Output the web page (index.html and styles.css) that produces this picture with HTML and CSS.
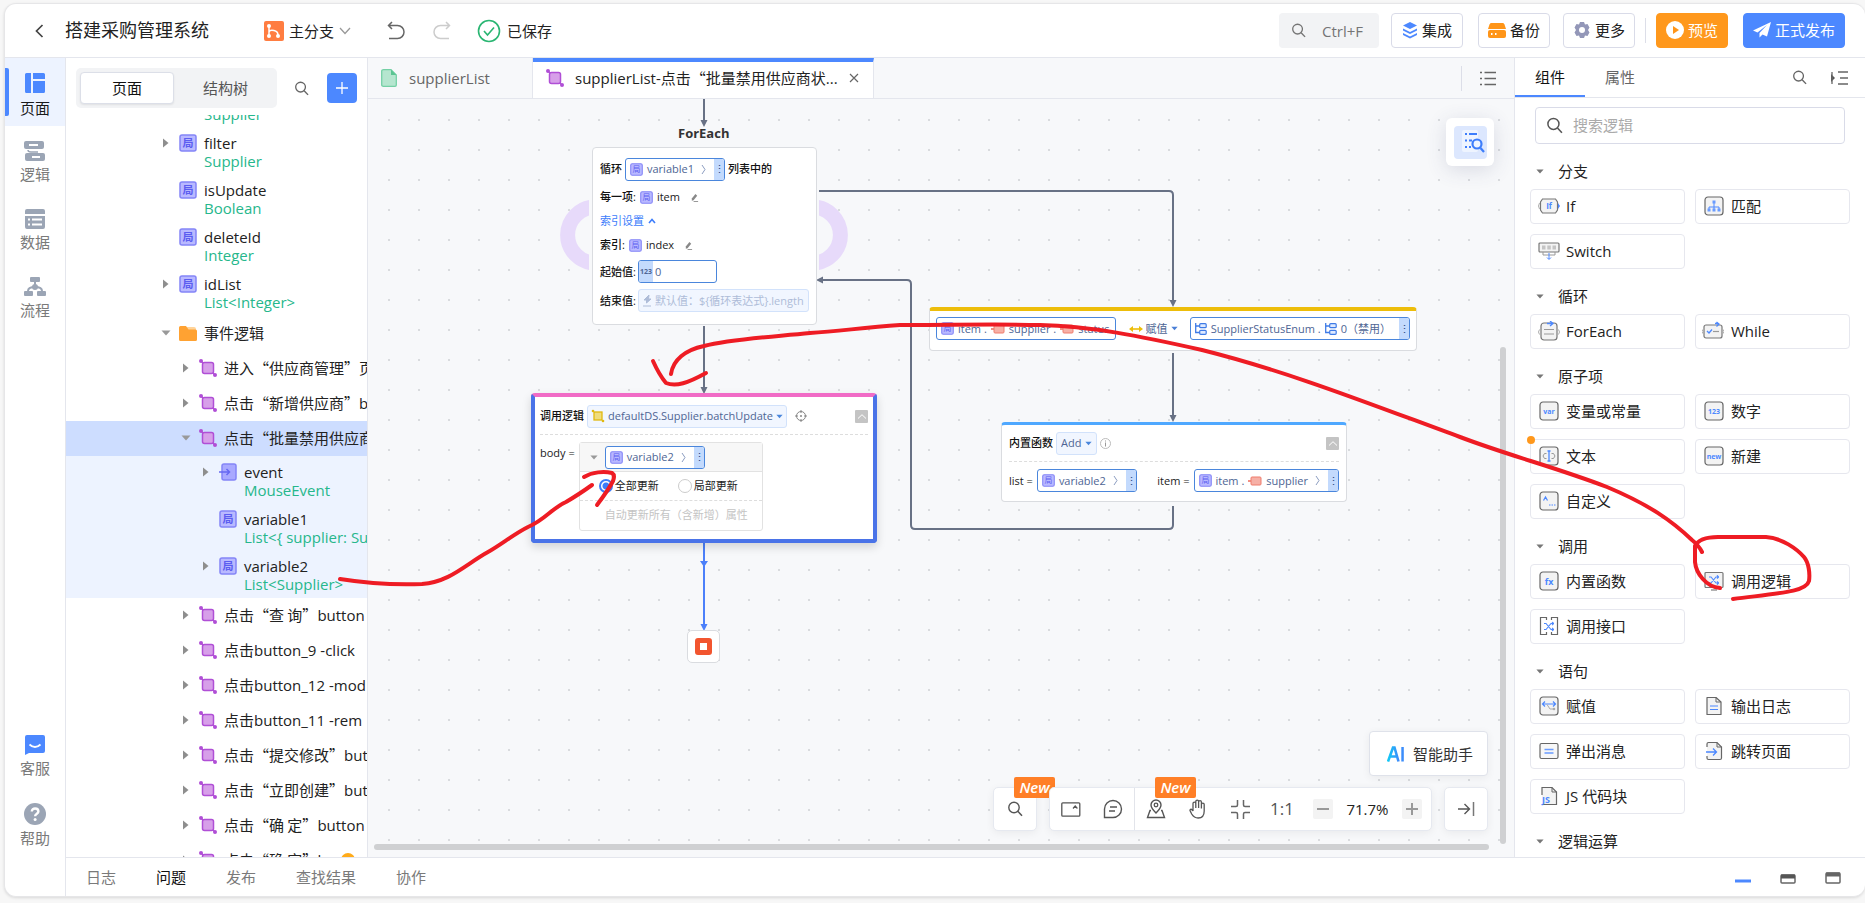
FILE: index.html
```html
<!DOCTYPE html>
<html lang="zh-CN">
<head>
<meta charset="utf-8">
<title>搭建采购管理系统</title>
<link rel="stylesheet" href="styles.css">
</head>
<body>
<svg class="defs" aria-hidden="true">
  <symbol id="search" viewBox="0 0 16 16"><circle cx="7" cy="6.500" r="5.200" fill="none" stroke="currentColor" stroke-width="1.400"/><path d="M10.800 10.300L15 14.800" stroke="currentColor" stroke-width="1.500"/></symbol>
  <symbol id="local" viewBox="0 0 18 18"><rect x="1" y="1" width="16" height="16" rx="2" fill="#b9b9ff" stroke="#8485f7" stroke-width="1.500"/><text x="9" y="13" text-anchor="middle" font-size="11" fill="#5b5df0">局</text></symbol>
  <symbol id="param" viewBox="0 0 18 18"><rect x="3" y="1" width="14" height="16" rx="2" fill="#a9a9ff" stroke="#8485f7" stroke-width="1.500"/><path d="M0 9h10M7.500 6l3 3-3 3" fill="none" stroke="#6668f2" stroke-width="1.500"/></symbol>
  <symbol id="logic" viewBox="0 0 18 18"><path d="M1.500 1.500l14.500 14.500" stroke="#b04fd6" stroke-width="1.500"/><rect x="3.500" y="3.500" width="11" height="11" rx="2" fill="#d79fe9" stroke="#b04fd6" stroke-width="1.500"/><circle cx="2" cy="2" r="2" fill="#b04fd6"/><circle cx="16" cy="16" r="2" fill="#b04fd6"/></symbol>
  <symbol id="ylogic" viewBox="0 0 14 14"><rect x="3" y="3" width="8" height="8" fill="#efdc7c" stroke="#e0b810" stroke-width="1.300"/><circle cx="2" cy="2" r="1.300" fill="#e0b810"/><circle cx="12" cy="12" r="1.300" fill="#e0b810"/></symbol>
  <symbol id="folder" viewBox="0 0 18 16"><path d="M8 2h7q2 0 2 2v3H8z" fill="#ffd49b"/><path d="M0 2.500Q0 1 1.500 1H7l2.500 3.500h7q1.500 0 1.500 1.500v8.500q0 1.500-1.500 1.500h-15Q0 16 0 14.500z" fill="#ffa232"/></symbol>
  <symbol id="arrow" viewBox="0 0 6 10"><path d="M0 .5L5.500 5 0 9.500z" fill="#8e8e8e"/></symbol>
  <symbol id="down" viewBox="0 0 10 6"><path d="M.5 .5h9L5 5.500z" fill="currentColor"/></symbol>
  <symbol id="chev" viewBox="0 0 12 8"><path d="M1 1l5 5.500L11 1" fill="none" stroke="currentColor" stroke-width="1.300"/></symbol>
  <symbol id="prop" viewBox="0 0 14 10"><path d="M0 5h4" stroke="#ef6a5a" stroke-width="1.500"/><rect x="3" y="1" width="10" height="8" rx="1" fill="#f6b0a6" stroke="#ef7c6d"/></symbol>
  <symbol id="enum" viewBox="0 0 12 12"><path d="M.7 0v9.500H5M1 3h4" fill="none" stroke="#3e7be6" stroke-width="1.300"/><rect x="4.700" y=".7" width="6.500" height="4" rx="1" fill="#dfeaff" stroke="#3e7be6" stroke-width="1.200"/><rect x="4.700" y="7.300" width="6.500" height="4" rx="1" fill="#dfeaff" stroke="#3e7be6" stroke-width="1.200"/></symbol>
  <symbol id="pencil" viewBox="0 0 10 10"><path d="M2 6l4-5 2 2-4 5-2 .5z" fill="#888"/><path d="M4 9.500h5" stroke="#888"/></symbol>
  <symbol id="box" viewBox="0 0 20 20"><rect x="1" y="1" width="18" height="18" rx="3" fill="#f3f3f3" stroke="#666" stroke-width="1.200"/></symbol>
  <symbol id="page" viewBox="0 0 20 20"><path d="M3 1.500h9L17 6v12.500H3z" fill="#f3f3f3" stroke="#666" stroke-width="1.200" stroke-linejoin="round"/><path d="M12 1.500V6h5" fill="none" stroke="#666"/></symbol>
  <symbol id="shuffle" viewBox="0 0 10 10"><path d="M0 2h2l5 6h2.500M0 8h2l5-6h2.500M8 .3L9.700 2 8 3.700M8 6.300L9.700 8 8 9.700" fill="none" stroke="#4c88ff" stroke-width="1.100"/></symbol>
</svg>

<div class="app">
  <header class="top">
    <button class="back" aria-label="返回"><svg width="9" height="14" viewBox="0 0 9 14"><path d="M7.500 1L1.500 7l6 6" fill="none" stroke="#444" stroke-width="1.700"/></svg></button>
    <h1 class="title">搭建采购管理系统</h1>
    <button class="branch">
      <svg width="20" height="20" viewBox="0 0 20 20"><rect width="20" height="20" rx="2" fill="#ff7d41"/><path d="M5 5v10M5 11c1-3 9-2 9 3" fill="none" stroke="#fff" stroke-width="1.500"/><circle cx="5" cy="5" r="2" fill="#fff"/><circle cx="5" cy="15" r="2" fill="#fff"/><circle cx="14" cy="15" r="2" fill="#fff"/></svg>
      <span>主分支</span>
      <svg class="grey" width="12" height="8"><use href="#chev"/></svg>
    </button>
    <button class="hist" aria-label="撤销"><svg width="18" height="20" viewBox="0 0 18 20"><path d="M5 1L1.500 4.500 5 8M2 4.500h8.500a6 6 0 0 1 0 13H2" fill="none" stroke="#666" stroke-width="1.500"/></svg></button>
    <button class="hist redo" aria-label="重做"><svg width="18" height="20" viewBox="0 0 18 20"><path d="M13 1l3.500 3.500L13 8M16 4.500H7.500a6 6 0 0 0 0 13H16" fill="none" stroke="#ccc" stroke-width="1.500"/></svg></button>
    <div class="saved"><svg width="24" height="24" viewBox="0 0 24 24"><circle cx="12" cy="12" r="10.500" fill="none" stroke="#2bb673" stroke-width="1.600"/><path d="M7 12l3.500 4L17 8.500" fill="none" stroke="#2bb673" stroke-width="1.600"/></svg><span>已保存</span></div>
    <div class="actions">
      <button class="find"><svg width="15" height="15"><use href="#search"/></svg><span>Ctrl+F</span></button>
      <button class="btn"><svg width="16" height="18" viewBox="0 0 16 18"><path d="M8 1l7 3.500L8 8 1 4.500z" fill="#4c88ff"/><path d="M1 7.500L8 11l7-3.500v2L8 13 1 9.500zM1 12l7 3.500 7-3.500v2L8 17.500 1 14z" fill="#4c88ff"/></svg>集成</button>
      <button class="btn"><svg width="18" height="16" viewBox="0 0 18 16"><path d="M3 1h12q1 0 1.500 1.500L18 7H0l1.500-4.500Q2 1 3 1z" fill="#ff9518"/><rect y="8" width="18" height="8" rx="2" fill="#ff9518"/><path d="M3 12h1.500M7 12h1.500" stroke="#fff" stroke-width="2"/></svg>备份</button>
      <button class="btn more"><svg width="18" height="18" viewBox="0 0 18 18"><path d="M7 1h4l1 2.500 2.500-.5 2 3.500L15 9l1.500 2.500-2 3.500-2.500-.5L11 17H7l-1-2.500-2.500.5-2-3.500L3 9 1.500 6.500l2-3.500 2.500.5z" fill="#9397b8"/><circle cx="9" cy="9" r="3" fill="#fff"/></svg>更多</button>
      <span class="sep"></span>
      <button class="btn orange"><svg width="18" height="18" viewBox="0 0 18 18"><circle cx="9" cy="9" r="9" fill="#fff"/><path d="M7 5l6 4-6 4z" fill="#ff9518"/></svg>预览</button>
      <button class="btn blue"><svg width="18" height="16" viewBox="0 0 18 16"><path d="M18 0L0 8.500l4.500 2L14 3 6.500 11v4.500l3-3 4.500 2z" fill="#fff"/></svg>正式发布</button>
    </div>
  </header>

  <div class="main">
    <nav class="rail">
      <a class="nav on" href="#"><svg width="20" height="20" viewBox="0 0 20 20"><path d="M1.500 0H6v20H1.500Q0 20 0 18.500v-17Q0 0 1.500 0zM8 0h10.500Q20 0 20 1.500V6H8zM8 8h12v10.500q0 1.500-1.500 1.500H8z" fill="#4c88ff"/></svg>页面</a>
      <a class="nav" href="#"><svg width="22" height="20" viewBox="0 0 22 20"><rect width="20" height="8" rx="2" fill="#9ba5b5"/><rect x="1" y="12" width="20" height="8" rx="2" fill="#9ba5b5"/><path d="M5 4h9M8 16h8" stroke="#fff" stroke-width="2"/><path d="M4 9q0 2 3 2h7" fill="none" stroke="#9ba5b5" stroke-width="1.500"/></svg>逻辑</a>
      <a class="nav" href="#"><svg width="20" height="20" viewBox="0 0 20 20"><path d="M2 0h16q2 0 2 2v3H0V2Q0 0 2 0zM0 7h20v11q0 2-2 2H2q-2 0-2-2z" fill="#9ba5b5"/><path d="M3 10.500h2M7 10.500h10M3 15.500h2M7 15.500h10" stroke="#fff" stroke-width="2"/></svg>数据</a>
      <a class="nav" href="#"><svg width="22" height="20" viewBox="0 0 22 20"><rect x="6" y="0" width="10" height="5" rx="1" fill="#9ba5b5"/><path d="M11 5v5M4 14q0-4 7-4t7 4" fill="none" stroke="#9ba5b5" stroke-width="2"/><circle cx="11" cy="10" r="3" fill="#9ba5b5"/><rect x="0" y="14" width="9" height="5" rx="1" fill="#9ba5b5"/><rect x="13" y="14" width="9" height="5" rx="1" fill="#9ba5b5"/></svg>流程</a>
      <a class="nav push" href="#"><svg width="20" height="20" viewBox="0 0 20 20"><path d="M2 0h16q2 0 2 2v14q0 2-2 2H4l-4 2V2Q0 0 2 0z" fill="#4c88ff"/><path d="M4.500 9.500q5.500 5 11 0" fill="none" stroke="#fff" stroke-width="1.800"/></svg>客服</a>
      <a class="nav" href="#"><svg width="22" height="22" viewBox="0 0 22 22"><circle cx="11" cy="11" r="11" fill="#9ba5b5"/><path d="M7.800 8.600c0-4.200 6.600-4 6.600 0 0 2.200-3.300 2.200-3.300 4.700" fill="none" stroke="#fff" stroke-width="2.400"/><circle cx="11.100" cy="16.500" r="1.500" fill="#fff"/></svg>帮助</a>
    </nav>

    <div class="work">
      <div class="columns">
        <aside class="tree-panel">
          <div class="tree-head">
            <div class="seg"><button class="on">页面</button><button>结构树</button></div>
            <button class="glass" aria-label="搜索"><svg width="15" height="15"><use href="#search"/></svg></button>
            <button class="plus" aria-label="新增"><svg width="14" height="14" viewBox="0 0 14 14"><path d="M7 1v12M1 7h12" stroke="#fff" stroke-width="1.300"/></svg></button>
          </div>
          <div class="tree">
            <div class="row clip"><i></i><b></b><span><em>Supplier</em></span></div>
            <div class="vars">
              <div class="row two"><i><svg width="6" height="10"><use href="#arrow"/></svg></i><b><svg width="18" height="18"><use href="#local"/></svg></b><span>filter<em>Supplier</em></span></div>
              <div class="row two"><i></i><b><svg width="18" height="18"><use href="#local"/></svg></b><span>isUpdate<em>Boolean</em></span></div>
              <div class="row two"><i></i><b><svg width="18" height="18"><use href="#local"/></svg></b><span>deleteId<em>Integer</em></span></div>
              <div class="row two"><i><svg width="6" height="10"><use href="#arrow"/></svg></i><b><svg width="18" height="18"><use href="#local"/></svg></b><span>idList<em>List&lt;Integer&gt;</em></span></div>
            </div>
            <div class="row"><i><svg class="grey" width="10" height="6"><use href="#down"/></svg></i><b><svg width="18" height="16"><use href="#folder"/></svg></b><span>事件逻辑</span></div>
            <div class="row l2 cjk"><i><svg width="6" height="10"><use href="#arrow"/></svg></i><b><svg width="18" height="18"><use href="#logic"/></svg></b><span>进入“供应商管理”页</span></div>
            <div class="row l2 cjk"><i><svg width="6" height="10"><use href="#arrow"/></svg></i><b><svg width="18" height="18"><use href="#logic"/></svg></b><span>点击“新增供应商”<bdi>button</bdi></span></div>
            <div class="row l2 cjk picked"><i><svg class="grey" width="10" height="6"><use href="#down"/></svg></i><b><svg width="18" height="18"><use href="#logic"/></svg></b><span>点击“批量禁用供应商</span></div>
            <div class="vars inner">
              <div class="row two l3"><i><svg width="6" height="10"><use href="#arrow"/></svg></i><b><svg width="18" height="18"><use href="#param"/></svg></b><span>event<em>MouseEvent</em></span></div>
              <div class="row two l3"><i></i><b><svg width="18" height="18"><use href="#local"/></svg></b><span>variable1<em>List&lt;{ supplier: Supplier</em></span></div>
              <div class="row two l3"><i><svg width="6" height="10"><use href="#arrow"/></svg></i><b><svg width="18" height="18"><use href="#local"/></svg></b><span>variable2<em>List&lt;Supplier&gt;</em></span></div>
            </div>
            <div class="row l2 cjk"><i><svg width="6" height="10"><use href="#arrow"/></svg></i><b><svg width="18" height="18"><use href="#logic"/></svg></b><span>点击“查 询”<bdi>button</bdi></span></div>
            <div class="row l2"><i><svg width="6" height="10"><use href="#arrow"/></svg></i><b><svg width="18" height="18"><use href="#logic"/></svg></b><span>点击button_9 -click</span></div>
            <div class="row l2"><i><svg width="6" height="10"><use href="#arrow"/></svg></i><b><svg width="18" height="18"><use href="#logic"/></svg></b><span>点击button_12 -mod</span></div>
            <div class="row l2"><i><svg width="6" height="10"><use href="#arrow"/></svg></i><b><svg width="18" height="18"><use href="#logic"/></svg></b><span>点击button_11 -rem</span></div>
            <div class="row l2 cjk"><i><svg width="6" height="10"><use href="#arrow"/></svg></i><b><svg width="18" height="18"><use href="#logic"/></svg></b><span>点击“提交修改”<bdi>button</bdi></span></div>
            <div class="row l2 cjk"><i><svg width="6" height="10"><use href="#arrow"/></svg></i><b><svg width="18" height="18"><use href="#logic"/></svg></b><span>点击“立即创建”<bdi>button</bdi></span></div>
            <div class="row l2 cjk"><i><svg width="6" height="10"><use href="#arrow"/></svg></i><b><svg width="18" height="18"><use href="#logic"/></svg></b><span>点击“确 定”<bdi>button</bdi></span></div>
            <div class="row l2 cjk"><i><svg width="6" height="10"><use href="#arrow"/></svg></i><b><svg width="18" height="18"><use href="#logic"/></svg></b><span>点击“确 定”<bdi>b</bdi></span><u class="warn"></u></div>
          </div>
        </aside>

        <section class="editor">
          <div class="tabs">
            <button class="tab"><svg width="16" height="18" viewBox="0 0 16 18"><path d="M2.500 .7H10L15.300 6v10q0 1.300-1.300 1.300H2.500Q.7 17.300.7 16V2Q.7.7 2.500.7z" fill="#b5e6cf" stroke="#74d0a5" stroke-width="1.300"/><path d="M10 .7V6h5.300z" fill="#5bc492"/></svg><span>supplierList</span></button>
            <button class="tab on"><svg width="18" height="18"><use href="#logic"/></svg><span>supplierList-点击<span class="cjk">“</span>批量禁用供应商状...</span><svg width="10" height="10" viewBox="0 0 10 10"><path d="M1 1l8 8M9 1L1 9" stroke="#666" stroke-width="1.200"/></svg></button>
            <button class="tablist" aria-label="标签列表"><svg width="16" height="15" viewBox="0 0 16 15"><path d="M0 1.500h2M4.500 1.500H16M0 7.500h2M4.500 7.500H16M0 13.500h2M4.500 13.500H16" stroke="#666" stroke-width="1.300"/></svg></button>
          </div>
          <div class="canvas">
            <svg class="wires" aria-hidden="true">
              <g transform="translate(-368 -99)">
                <clipPath id="arcs"><path d="M555 190h34v90h-34zM819 190h34v90h-34z"/></clipPath>
                <g clip-path="url(#arcs)" fill="none" stroke="#e7dafa" stroke-width="15"><circle cx="595.600" cy="235" r="28"/><circle cx="812.400" cy="235" r="28"/></g>
                <g fill="none" stroke="#687185" stroke-width="2">
                  <path d="M704 99v22M704 326v62M819 191h350q4 0 4 4v107M1173 353v64M1173 506v19q0 4-4 4H915q-4 0-4-4V284q0-4-4-4h-85"/>
                </g>
                <path d="M700.500 120h7l-3.500 7zM700.500 387h7l-3.500 7zM1169.500 300h7l-3.500 7zM1169.500 415h7l-3.500 7zM823 276.500v7l-7-3.500z" fill="#687185"/>
                <path d="M704 543v83" stroke="#4c80fa" stroke-width="2"/>
                <path d="M700 561h8l-4 6zM700.500 624h7l-3.500 7z" fill="#4c80fa"/>
              </g>
            </svg>

            <div class="caption">ForEach</div>
            <div class="node foreach">
              <div class="line"><strong>循环</strong><span class="chip"><svg width="13" height="13"><use href="#local"/></svg><span>variable1</span><svg class="go" width="5" height="9" viewBox="0 0 5 9"><path d="M1 0l3 4.500L1 9" fill="none" stroke="#8b9cc0"/></svg><button aria-label="更多">⋮</button></span><strong>列表中的</strong></div>
              <div class="line s24"><strong>每一项:</strong><svg width="13" height="13"><use href="#local"/></svg><span>item</span><svg class="pen" width="9" height="9"><use href="#pencil"/></svg></div>
              <div class="line s24 link"><a href="#">索引设置</a><svg width="8" height="6" viewBox="0 0 8 6"><path d="M1 5l3-3.500L7 5" fill="none" stroke="#3d7dfb" stroke-width="1.600"/></svg></div>
              <div class="line s24"><strong class="mid">索引:</strong><svg width="13" height="13"><use href="#local"/></svg><span>index</span><svg class="pen" width="9" height="9"><use href="#pencil"/></svg></div>
              <div class="line s29"><label class="mid" for="start">起始值:</label><span class="field"><u>123</u><input id="start" value="0"></span></div>
              <div class="line s29"><label class="mid" for="end">结束值:</label><span class="field soft"><svg width="11" height="12" viewBox="0 0 11 12"><path d="M7 0L2 5h2.500v3L9 4H6.500zM1 11h8" fill="#aebcd8" stroke="#aebcd8"/></svg><input id="end" placeholder="默认值：${循环表达式}.length"></span></div>
            </div>

            <div class="node assign">
              <span class="chip"><svg width="13" height="13"><use href="#local"/></svg><span>item .</span><svg width="14" height="10"><use href="#prop"/></svg><span>supplier .</span><svg width="14" height="10"><use href="#prop"/></svg><span>status</span></span>
              <span class="op"><svg width="14" height="8" viewBox="0 0 14 8"><path d="M2 4h10" stroke="#edbd0a" stroke-width="1.600"/><path d="M0 4l4-3v6zM14 4l-4-3v6z" fill="#edbd0a"/></svg>
              <select aria-label="操作"><option>赋值</option></select><svg width="7" height="5"><use href="#down"/></svg></span>
              <span class="chip"><svg width="12" height="12"><use href="#enum"/></svg><span>SupplierStatusEnum .</span><svg width="12" height="12"><use href="#enum"/></svg><span>0（禁用）</span><button aria-label="更多">⋮</button></span>
            </div>

            <div class="node add">
              <div class="head"><strong>内置函数</strong><span class="pick"><select aria-label="函数"><option>Add</option></select><svg width="7" height="5"><use href="#down"/></svg></span><svg width="11" height="11" viewBox="0 0 11 11"><circle cx="5.500" cy="5.500" r="5" fill="none" stroke="#bbb"/><path d="M5.500 2.500v1M5.500 4.500v4" stroke="#999"/></svg><button class="fold" aria-label="收起"><svg width="8" height="5" viewBox="0 0 8 5"><path d="M0 4.500L4 .7l4 3.800" fill="none" stroke="#fff"/></svg></button></div>
              <div class="args"><span>list =</span><span class="chip"><svg width="13" height="13"><use href="#local"/></svg><span>variable2</span><svg class="go" width="5" height="9" viewBox="0 0 5 9"><path d="M1 0l3 4.500L1 9" fill="none" stroke="#8b9cc0"/></svg><button aria-label="更多">⋮</button></span><span class="next">item =</span><span class="chip"><svg width="13" height="13"><use href="#local"/></svg><span>item .</span><svg width="14" height="10"><use href="#prop"/></svg><span>supplier</span><svg class="go" width="5" height="9" viewBox="0 0 5 9"><path d="M1 0l3 4.500L1 9" fill="none" stroke="#8b9cc0"/></svg><button aria-label="更多">⋮</button></span></div>
            </div>

            <div class="node call">
              <div class="head"><strong>调用逻辑</strong><span class="pick wide"><svg width="14" height="14"><use href="#ylogic"/></svg><select aria-label="逻辑"><option>defaultDS.Supplier.batchUpdate</option></select><svg width="7" height="5"><use href="#down"/></svg></span><svg width="12" height="12" viewBox="0 0 12 12"><circle cx="6" cy="6" r="4.500" fill="none" stroke="#888"/><circle cx="6" cy="6" r="1" fill="#888"/><path d="M6 0v3M6 9v3M0 6h3M9 6h3" stroke="#888"/></svg><button class="fold" aria-label="收起"><svg width="8" height="5" viewBox="0 0 8 5"><path d="M0 4.500L4 .7l4 3.800" fill="none" stroke="#fff"/></svg></button></div>
              <div class="body"><span>body =</span>
                <div class="grid">
                  <div class="ghead"><svg class="grey" width="8" height="5"><use href="#down"/></svg><span class="chip"><svg width="13" height="13"><use href="#local"/></svg><span>variable2</span><svg class="go" width="5" height="9" viewBox="0 0 5 9"><path d="M1 0l3 4.500L1 9" fill="none" stroke="#8b9cc0"/></svg><button aria-label="更多">⋮</button></span></div>
                  <div class="radios"><label><input type="radio" name="mode" checked>全部更新</label><label><input type="radio" name="mode">局部更新</label></div>
                  <div class="hint">自动更新所有（含新增）属性</div>
                </div>
              </div>
            </div>
            <div class="node stop"><span></span></div>

            <button class="outline" aria-label="大纲"><span><svg width="25" height="26" viewBox="-4 -2 25 26"><rect x="-3" y="-1" width="16" height="22" rx="2" fill="#eef4ff"/><path d="M0 3h2M4 3h8M0 9.500h2M4 9.500h3M0 16h2M4 16h2" stroke="#3d7dfb" stroke-width="2"/><circle cx="12" cy="13" r="4.500" fill="#eef4ff" stroke="#3d7dfb" stroke-width="2.200"/><path d="M15.500 17l3.500 4" stroke="#3d7dfb" stroke-width="2.200"/></svg></span></button>

            <div class="dock">
              <button class="ai"><svg width="17" height="16" viewBox="0 0 17 16"><defs><linearGradient id="aig"><stop offset="0" stop-color="#13c8f5"/><stop offset="1" stop-color="#3b8dfb"/></linearGradient></defs><path d="M1 15.500L6 1.500h1.500l4 14M3 10.500h7.500" fill="none" stroke="url(#aig)" stroke-width="2.600"/><path d="M14.300 1h2.500v14.500h-2.500z" fill="#3b8dfb"/></svg><span>智能助手</span></button>
              <div class="tools">
                <div class="card solo"><button aria-label="搜索"><svg width="16" height="16"><use href="#search"/></svg></button><mark>New</mark></div>
                <div class="card">
                  <button aria-label="窗口"><svg width="20" height="15" viewBox="0 0 20 15"><rect x=".8" y=".8" width="18" height="13.400" rx="1" fill="none" stroke="#555" stroke-width="1.300"/><path d="M12 6.500L14.200 4l2.200 2.500" fill="none" stroke="#555" stroke-width="1.200"/></svg></button>
                  <button aria-label="注释"><svg width="20" height="20" viewBox="0 0 20 20"><path d="M1.500 18.500V10a8.500 8.500 0 1 1 8.500 8.500z" fill="none" stroke="#555" stroke-width="1.400"/><path d="M7 8h7M6 12h6" stroke="#555" stroke-width="1.300"/></svg></button>
                  <div class="zoomer">
                    <button aria-label="定位"><svg width="20" height="20" viewBox="0 0 20 20"><path d="M10 14C6 10 5 8 5 6a5 5 0 0 1 10 0c0 2-1 4-5 8zM5 11.500H4L1.500 18.500h17L16 11.500h-1" fill="none" stroke="#555" stroke-width="1.400"/><circle cx="10" cy="6" r="1.800" fill="none" stroke="#555" stroke-width="1.300"/></svg></button><mark>New</mark>
                    <button aria-label="拖动"><svg width="20" height="20" viewBox="0 0 20 20"><path d="M5 12V4.500a1.400 1.400 0 0 1 2.800 0V9V2.500a1.400 1.400 0 0 1 2.800 0V9V3a1.400 1.400 0 0 1 2.800 0v6.500V5.500a1.400 1.400 0 0 1 2.800 0V12c0 5-2.500 7-6 7-3.200 0-5-1.500-6.500-4L2 11.500c0-2 2-1.500 3 .5z" fill="none" stroke="#555" stroke-width="1.300"/></svg></button>
                    <button aria-label="适应"><svg width="19" height="19" viewBox="0 0 19 19"><path d="M6.500 0v5q0 1.500-1.500 1.500H0M12.500 0v5q0 1.500 1.500 1.500h5M6.500 19v-5q0-1.500-1.500-1.500H0M12.500 19v-5q0-1.500 1.500-1.500h5" fill="none" stroke="#666" stroke-width="1.500"/></svg></button>
                    <button class="ratio">1:1</button>
                    <button class="step" aria-label="缩小"><svg width="12" height="12" viewBox="0 0 12 12"><path d="M0 6h12" stroke="#999" stroke-width="2"/></svg></button>
                    <output>71.7%</output>
                    <button class="step" aria-label="放大"><svg width="12" height="12" viewBox="0 0 12 12"><path d="M0 6h12M6 0v12" stroke="#999" stroke-width="2"/></svg></button>
                  </div>
                </div>
                <div class="card solo"><button aria-label="收起"><svg width="17" height="14" viewBox="0 0 17 14"><path d="M0 7h11M6.500 2l5 5-5 5" fill="none" stroke="#555" stroke-width="1.400"/><path d="M15.500 0v14" stroke="#777" stroke-width="1.500"/></svg></button></div>
              </div>
            </div>
            <div class="hbar"></div><div class="vbar"></div>
          </div>
        </section>

        <aside class="lib">
          <div class="libtabs"><button class="on">组件</button><button>属性</button><span class="tools2"><svg width="15" height="15"><use href="#search"/></svg><svg width="17" height="14" viewBox="0 0 17 14"><path d="M0 3l4 4-4 4z" fill="#555"/><path d="M1 1v12M7 1h10M9 7h8M7 13h10" stroke="#666" stroke-width="1.300"/></svg></span></div>
          <div class="libbody">
            <label class="query"><svg width="17" height="17"><use href="#search"/></svg><input placeholder="搜索逻辑" aria-label="搜索逻辑"></label>

            <h2><svg width="8" height="5"><use href="#down"/></svg>分支</h2>
            <div class="items">
              <button><svg width="22" height="20" viewBox="0 0 22 20"><path d="M4.500 3h13l2 3v8l-2 3h-13l-2-3V6z" fill="#f3f3f3" stroke="#777" stroke-width="1.200"/><path d="M1.500 7L.5 10l1 3" fill="none" stroke="#aaa"/><path d="M22 10l-2-3v6z" fill="#4c88ff"/><text x="11" y="13" font-size="8" text-anchor="middle" fill="#4c88ff" font-weight="700">If</text></svg>If</button>
              <button><svg width="20" height="20" viewBox="0 0 20 20"><use href="#box"/><path d="M10 7v4M5 13v-2h10v2M10 11v2" fill="none" stroke="#4c88ff"/><path d="M8.500 4.500h3v3h-3zM3.500 12.500h3v3h-3zM8.500 12.500h3v3h-3zM13.500 12.500h3v3h-3z" fill="#6a9cff"/></svg>匹配</button>
              <button><svg width="22" height="20" viewBox="0 0 22 20"><rect x="1" y="2" width="20" height="9" rx="1" fill="#f3f3f3" stroke="#777" stroke-width="1.200"/><path d="M4 6.500h3.500M9.300 6.500h3.500M14.500 6.500H18" stroke="#c4c4c4" stroke-width="4"/><path d="M5 11v3h12v-3" fill="none" stroke="#999"/><path d="M11 12v6M9 16.500l2 2 2-2" fill="none" stroke="#4c88ff"/></svg>Switch</button>
            </div>

            <h2><svg width="8" height="5"><use href="#down"/></svg>循环</h2>
            <div class="items">
              <button><svg width="22" height="20" viewBox="0 0 22 20"><rect x="3" y="2" width="16" height="17" rx="3" fill="#f3f3f3" stroke="#777" stroke-width="1.200"/><path d="M1.500 8.500L.5 11l1 2.500M20.500 8.500l1 2.500-1 2.500" fill="none" stroke="#aaa"/><path d="M6 8.500h10M6 13h10" stroke="#999" stroke-width="1.200"/><path d="M9 2.500h5M12 0l3 2.500L12 5" fill="none" stroke="#4c88ff" stroke-width="1.300"/></svg>ForEach</button>
              <button class="wideicon"><svg width="22" height="20" viewBox="0 0 22 20"><rect x="2" y="4" width="18" height="13" rx="2" fill="#f3f3f3" stroke="#777" stroke-width="1.200"/><path d="M5 10l2 2 3-3.500M13 2.500h3M14.500 1l2.500 2-2.500 2.500" fill="none" stroke="#4c88ff" stroke-width="1.300"/><path d="M11 10.500h6" stroke="#999" stroke-width="1.200"/><path d="M.8 8.500L0 10.500l.8 2M21.200 8.500l.8 2-.8 2" stroke="#aaa" fill="none"/></svg>While</button>
            </div>

            <h2><svg width="8" height="5"><use href="#down"/></svg>原子项</h2>
            <div class="items">
              <button><svg width="22" height="20" viewBox="-1 0 22 20"><use href="#box" width="20" height="20"/><text class="gl" x="10" y="12.500">var</text></svg>变量或常量</button>
              <button><svg width="20" height="20" viewBox="0 0 20 20"><use href="#box"/><text class="gl" x="10" y="13">123</text></svg>数字</button>
              <button class="dot"><svg width="22" height="20" viewBox="-1 0 22 20"><use href="#box" width="20" height="20"/><path d="M10 5.500v9M8.500 5h3M8.500 15h3" stroke="#4c88ff" stroke-width="1.300"/><path d="M7.500 7.500h-2L4 10l1.500 2.500h2M12.500 7.500h2L16 10l-1.500 2.500h-2" fill="none" stroke="#999"/></svg>文本</button>
              <button><svg width="20" height="20" viewBox="0 0 20 20"><use href="#box"/><text class="gl" x="10" y="12.500">new</text></svg>新建</button>
              <button><svg width="22" height="20" viewBox="-1 0 22 20"><use href="#box" width="20" height="20"/><path d="M4.500 9.500L6.500 6l2 3.500M10 14h1.500M12.500 14H14M15 14h1.500" fill="none" stroke="#4c88ff" stroke-width="1.200"/></svg>自定义</button>
            </div>

            <h2><svg width="8" height="5"><use href="#down"/></svg>调用</h2>
            <div class="items">
              <button><svg width="22" height="20" viewBox="-1 0 22 20"><use href="#box" width="20" height="20"/><text class="gl fx" x="10" y="13.500">fx</text></svg>内置函数</button>
              <button><svg width="20" height="20" viewBox="0 0 20 20"><rect x="1" y="1.500" width="18" height="15" rx="1" fill="#f3f3f3" stroke="#777" stroke-width="1.200"/><path d="M7 19h6" stroke="#999" stroke-width="1.500"/><use href="#shuffle" x="5" y="4" width="10" height="10"/></svg>调用逻辑</button>
              <button><svg width="22" height="20" viewBox="-1 0 22 20"><path d="M7.500 1.500H1.500v17H7.500M12.500 1.500H18.500v17H12.500M7.500 1v3M7.500 16v3M12.500 1v3M12.500 16v3" fill="none" stroke="#666" stroke-width="1.200"/><use href="#shuffle" x="5" y="5.500" width="10" height="10"/></svg>调用接口</button>
            </div>

            <h2><svg width="8" height="5"><use href="#down"/></svg>语句</h2>
            <div class="items">
              <button><svg width="22" height="20" viewBox="-1 0 22 20"><use href="#box" width="20" height="20"/><path d="M4 8h12M6 5.500L3.500 8 6 10.500M14 5.500L16.500 8 14 10.500" fill="none" stroke="#4c88ff" stroke-width="1.200"/><path d="M8 8.500l3 4.500h3" fill="none" stroke="#aaa"/><circle cx="15" cy="13" r="1.300" fill="#aaa"/></svg>赋值</button>
              <button><svg width="20" height="20" viewBox="0 0 20 20"><use href="#page"/><path d="M6 10h8M6 13.500h8" stroke="#4c88ff" stroke-width="1.200"/></svg>输出日志</button>
              <button><svg width="22" height="20" viewBox="-1 0 22 20"><rect x="1" y="2.500" width="18" height="15" rx="1.500" fill="#f7f7f7" stroke="#666" stroke-width="1.200"/><path d="M5.500 8.500h9M5.500 12h9" stroke="#6a9cff" stroke-width="1.300"/></svg>弹出消息</button>
              <button><svg width="20" height="20" viewBox="0 0 20 20"><path d="M3 6V3q0-1.500 1.500-1.500H13L17.500 6v11q0 1.500-1.500 1.500H4.500Q3 18.500 3 17v-2" fill="#f3f3f3" stroke="#666" stroke-width="1.200"/><path d="M13 1.500V6h4.500" fill="none" stroke="#666"/><path d="M2 11h10M9 7.500l3.500 3.500L9 14.500" fill="none" stroke="#4c88ff" stroke-width="1.300"/></svg>跳转页面</button>
              <button><svg width="22" height="20" viewBox="-1 0 22 20"><path d="M3 9V1.500h10L17.500 6v12.500H3" fill="#f3f3f3" stroke="#666" stroke-width="1.200"/><path d="M13 1.500V6h4.500" fill="none" stroke="#666"/><text class="gl fx" x="7" y="16.500">JS</text></svg>JS 代码块</button>
            </div>

            <h2><svg width="8" height="5"><use href="#down"/></svg>逻辑运算</h2>
          </div>
        </aside>
      </div>

      <footer class="status">
        <button>日志</button><button class="on">问题</button><button>发布</button><button>查找结果</button><button>协作</button>
        <span class="sizes"><svg width="16" height="14" viewBox="0 0 16 14"><path d="M0 11h16" stroke="#4c88ff" stroke-width="3"/></svg><svg width="16" height="14" viewBox="0 0 16 14"><rect x="1" y="5" width="14" height="8" rx="1" fill="#fff" stroke="#666" stroke-width="1.500"/><path d="M1 6.500h14" stroke="#555" stroke-width="4"/></svg><svg width="16" height="14" viewBox="0 0 16 14"><rect x="1" y="3" width="14" height="10" rx="1" fill="#fff" stroke="#666" stroke-width="1.500"/><path d="M1 4.500h14" stroke="#666" stroke-width="4"/></svg></span>
      </footer>
    </div>
  </div>
</div>

<svg class="ink" aria-hidden="true">
  <g fill="none" stroke="#ee1c24" stroke-width="4" stroke-linecap="round" stroke-linejoin="round">
    <path d="M671 374C673 360 685 350 704 346C730 339 770 337 810 333C840 331 860 328 900 325C950 325 1000 324 1040 325C1090 326 1140 336 1202 350C1290 372 1370 404 1460 437C1510 456 1555 467 1607 487C1650 505 1672 521 1692 540C1697 544 1700 548 1702 552"/>
    <path d="M653 361C657 370 661 377 666 383C676 387 688 383 706 373"/>
    <path d="M1720 588C1706 587 1696 573 1695 562V546C1698 540 1706 537 1718 537H1766C1782 538 1797 549 1804 557C1809 563 1810 574 1809 581C1806 592 1780 593 1733 599"/>
    <path d="M340 579C365 583 395 585 422 584C450 582 466 564 488 552C502 544 514 534 528 527C545 520 552 508 566 502C578 495 585 490 592 485"/>
    <path d="M584 477C592 472 604 471 612 473C615 475 614 478 613 481C609 489 603 497 597 505"/>
  </g>
</svg>
</body>
</html>
```
FILE: styles.css
```css
* { box-sizing: border-box; }
body {
  margin: 0;
  height: 100vh;
  background: #f7f7f7;
  color: #222;
  font: 15px/20px "Open Sans", "Noto Sans CJK SC", sans-serif;
}
button, input, select { font: inherit; color: inherit; border: 0; background: none; padding: 0; margin: 0; }
button { white-space: nowrap; }
a { color: inherit; text-decoration: none; }
h1, h2 { margin: 0; font-weight: 400; }
svg { flex: none; display: block; }
.defs { position: absolute; width: 0; height: 0; }
.grey { color: #999; }
.cjk { font-family: "Noto Sans CJK SC", sans-serif; }
bdi { font-family: "Open Sans", sans-serif; }

.app {
  position: absolute;
  inset: 3px 0 6px 4px;
  display: flex;
  flex-direction: column;
  overflow: hidden;
  border: 1px solid #e6e6e8;
  border-right: 0;
  border-radius: 12px;
  background: #fff;
  box-shadow: 0 1px 3px rgba(0, 0, 0, .12);
}

/* header */
.top { display: flex; align-items: center; flex: none; height: 54px; padding: 0 20px 0 30px; border-bottom: 1px solid #e4e6ed; }
.back { width: 30px; }
.title { font-size: 18px; line-height: 24px; padding-bottom: 2px; }
.branch { display: flex; align-items: center; gap: 5px; margin-left: 55px; }
.hist { margin-left: 36px; }
.redo { margin-left: 28px; }
.saved { display: flex; align-items: center; gap: 6px; margin-left: 26px; }
.actions { display: flex; align-items: center; margin-left: auto; gap: 15px; }
.find { display: flex; align-items: center; gap: 16px; height: 35px; width: 100px; padding-left: 12px; margin-right: -3px; border-radius: 4px; background: #f2f3f5; color: #757575; }
.btn { display: flex; align-items: center; justify-content: center; gap: 4px; height: 35px; min-width: 72px; padding-bottom: 1px; border: 1px solid #d9dbe8; border-radius: 4px; }
.btn.more { margin-left: -2px; }
.btn.orange { background: #ff981c; border-color: #ff981c; color: #fff; }
.btn.blue { width: 102px; background: #4c88ff; border-color: #4c88ff; color: #fff; }
.sep { width: 1px; height: 25px; margin: 0 -5px; background: #dcdee8; }

.main { display: flex; flex: 1; min-height: 0; }

/* left rail */
.rail { display: flex; flex-direction: column; flex: none; width: 61px; padding-bottom: 40px; border-right: 1px solid #e4e6ed; color: #7a7a7a; }
.nav { display: flex; flex-direction: column; align-items: center; gap: 3px; height: 68px; padding-top: 15px; }
.nav.on { position: relative; gap: 5px; background: #edf3ff; color: #1a1a1a; }
.nav.on::before { content: ""; position: absolute; left: 0; top: 10px; width: 4px; height: 48px; border-radius: 0 2px 2px 0; background: #4c88ff; }
.nav.push { margin-top: auto; }

.work { display: flex; flex-direction: column; flex: 1; min-width: 0; }
.columns { display: flex; flex: 1; min-height: 0; }

/* page tree */
.tree-panel { display: flex; flex-direction: column; flex: none; width: 302px; border-right: 1px solid #e4e6ed; }
.tree-head { display: flex; align-items: center; padding: 10px 10px 0; }
.seg { display: flex; width: 201px; height: 40px; padding: 4px 0 4px 4px; border-radius: 5px; background: #f2f3f5; color: #555; }
.seg button { flex: 1; padding-bottom: 1px; }
.seg .on { flex: none; width: 94px; height: 32px; border: 1px solid #dcdfe8; border-radius: 4px; background: #fff; color: #111; box-shadow: 0 1px 2px rgba(0, 0, 0, .08); }
.glass { margin-left: 17px; color: #666; }
.plus { display: grid; place-items: center; width: 30px; height: 30px; margin-left: auto; border-radius: 4px; background: #4c88ff; }
.tree { flex: 1; min-height: 0; margin-top: 7px; overflow: hidden; color: #222; }
.row { display: flex; align-items: center; height: 35px; padding: 0 0 1px 90px; white-space: nowrap; }
.row i { display: flex; justify-content: center; flex: none; width: 20px; }
.row b { flex: none; width: 18px; margin: 0 7px 0 3px; }
.row em { display: block; font-style: normal; color: #26b78c; line-height: 17px; }
.row.clip { height: 11px; align-items: flex-end; padding-bottom: 3px; }
.row.two { height: 47px; align-items: flex-start; padding-top: 6px; line-height: 20px; }
.row.two i { padding-top: 5px; }
.row.two b { padding-top: 1px; }
.row.l2 { padding-left: 110px; }
.row.l3 { padding-left: 130px; }
.vars { padding: 1px 0; }
.row.picked { background: #cdddff; }
.vars.inner { background: #edf3ff; padding-top: 0; }
.warn { align-self: flex-start; flex: none; width: 14px; height: 14px; margin: 10px 0 0 14px; border-radius: 50%; background: #ffab1a; }

/* editor */
.editor { display: flex; flex-direction: column; flex: 1; min-width: 0; background: #f7f8fa; }
.tabs { display: flex; flex: none; height: 41px; border-bottom: 1px solid #e4e6ed; }
.tab { display: flex; align-items: center; gap: 12px; width: 165px; padding: 0 0 1px 13px; border-right: 1px solid #e4e6ed; color: #666; }
.tab.on { width: 341px; gap: 11px; padding-bottom: 5px; border-top: 4px solid #4c88ff; background: #fff; color: #222; }
.tablist { display: flex; align-items: center; height: 25px; margin: 8px 18px 0 auto; padding-left: 18px; border-left: 1px solid #dcdee8; }
.canvas {
  position: relative;
  flex: 1;
  min-height: 0;
  overflow: hidden;
  font-size: 11px;
  line-height: 16px;
  background-image: radial-gradient(circle, #d9dbde 1px, transparent 1px);
  background-size: 30px 30px;
  background-position: 6px 6px;
}
.wires { position: absolute; left: 0; top: 0; width: 100%; height: 100%; }
.node { position: absolute; border: 1px solid #dadce0; border-radius: 4px; background: #fff; white-space: nowrap; }
.canvas strong { font-weight: 500; color: #111; }
.canvas .mid { font-weight: 500; }
.caption { position: absolute; left: 310px; top: 24px; font-size: 13px; line-height: 20px; font-weight: 700; color: #333; }
.foreach { left: 224px; top: 48px; width: 225px; padding: 9px 7px 9px; }
.line { display: flex; align-items: center; gap: 4px; height: 24px; }
.foreach .line:first-child { gap: 3px; margin-bottom: 4px; }
.line .pen { margin-left: 6px; }
.link { color: #3d7dfb; }
.line.s29 { height: 29px; gap: 2px; }
.chip { display: flex; align-items: center; gap: 4px; height: 23px; padding-left: 4px; border: 1px solid #4a86dc; border-radius: 3px; background: #fff; color: #4e6594; overflow: hidden; }
.chip .go { margin: 0 4px 0 3px; }
.chip button { align-self: stretch; width: 10px; background: #c3dafd; color: #27467f; font-size: 11px; }
.field { display: flex; align-items: center; width: 79px; height: 23px; border: 1px solid #4a86dc; border-radius: 3px; overflow: hidden; color: #4e6594; }
.field u { display: grid; place-items: center; align-self: stretch; width: 14px; flex: none; background: #c3dafd; font: 700 7px/10px "Open Sans", sans-serif; text-decoration: none; }
.field input { width: 100%; padding-left: 2px; }
.field.soft { width: 172px; padding-left: 3px; border-color: #d2e2fb; background: #f1f6ff; }
.field.soft input::placeholder { color: #aebcd8; opacity: 1; }
.assign { left: 561px; top: 208px; width: 488px; height: 44px; display: flex; justify-content: space-between; padding: 6px; border-top: 4px solid #edbd0a; }
.assign .chip:first-child { padding-right: 6px; }
.assign .chip > button { margin-left: 4px; }
.op { display: flex; align-items: center; gap: 3px; height: 23px; color: #4a7fd6; }
select { appearance: none; color: #4e6594; }
.add { left: 633px; top: 323px; width: 346px; padding: 7px 7px 9px; border-top: 3px solid #4fa8ff; }
.head { display: flex; align-items: center; gap: 3px; height: 30px; padding-bottom: 7px; border-bottom: 1px dashed #ddd; }
.pick { display: flex; align-items: center; gap: 3px; height: 23px; padding: 0 4px; border: 1px solid #d2e2fb; border-radius: 3px; background: #f1f6ff; color: #4a86dc; }
.pick.wide { padding: 0 3px; margin-right: 5px; gap: 3px; }
.fold { display: grid; place-items: center; width: 13px; height: 13px; margin-left: auto; border-radius: 1px; background: #c4c4c4; }
.args { display: flex; align-items: center; gap: 4px; padding-top: 7px; }
.args .next { margin-left: auto; }
.call { left: 163px; top: 294px; width: 346px; padding: 8px 5px; border: 4px solid #4a73e8; border-top-color: #f16bc6; box-shadow: 0 4px 10px rgba(0, 0, 0, .15); }
.body { display: flex; gap: 4px; padding-top: 7px; }
.body > span { padding-top: 3px; }
.grid { width: 184px; border: 1px solid #e2e2e2; border-radius: 3px; }
.ghead { display: flex; align-items: center; gap: 7px; height: 29px; padding-left: 10px; background: #f7f7f7; border-bottom: 1px solid #e2e2e2; }
.radios { display: flex; gap: 19px; height: 29px; padding-left: 19px; border-bottom: 1px dashed #ddd; }
.radios label { display: flex; align-items: center; gap: 2px; }
.radios input { appearance: none; width: 14px; height: 14px; border: 1px solid #ccc; border-radius: 50%; }
.radios input:checked { border: 2px solid #3d7dfb; background: radial-gradient(circle, #3d7dfb 3px, #fff 4px); }
.hint { height: 29px; padding-left: 25px; line-height: 28px; color: #c4c4c4; }
.stop { left: 319px; top: 531px; display: grid; place-items: center; width: 33px; height: 33px; border-radius: 5px; }
.stop span { width: 17px; height: 17px; border: 5px solid #f2552f; border-radius: 3px; }

.outline { position: absolute; right: 20px; top: 19px; display: grid; place-items: center; width: 48px; height: 48px; border-radius: 6px; background: #fff; box-shadow: 0 4px 20px rgba(60, 70, 110, .16); }
.outline span { display: grid; place-items: center end; width: 33px; height: 33px; padding-right: 1px; border-radius: 4px; background: #dce7fe; }

.dock { position: absolute; right: 26px; bottom: 26px; display: flex; flex-direction: column; align-items: flex-end; gap: 11px; font-size: 15px; line-height: 20px; color: #333; }
.ai { display: flex; align-items: center; gap: 9px; height: 45px; padding: 0 14px 0 17px; border: 1px solid #dfe2ea; border-radius: 4px; background: #fff; box-shadow: 0 2px 8px rgba(0, 0, 0, .06); }
.tools { display: flex; gap: 12px; }
.card { position: relative; display: flex; height: 44px; border: 1px solid #e6e9f0; border-radius: 5px; background: #fff; box-shadow: 0 2px 8px rgba(0, 0, 0, .06); color: #555; }
.card.solo { padding-right: 0; }
.card button { display: grid; place-items: center; width: 42px; }
.zoomer { position: relative; display: flex; align-items: center; padding-right: 9px; border-left: 1px solid #e2e4ea; }
.card .ratio { font-size: 17px; }
.card .step { width: 20px; height: 20px; background: #f3f3f3; border-radius: 2px; margin: 0 0 0 10px; }
output { width: 69px; text-align: center; color: #222; }
.card output + .step { margin: 0; }
mark { position: absolute; left: 20px; top: -11px; width: 41px; height: 21px; border-radius: 2px; background: #ff7f27; color: #fff; font-style: italic; font-weight: 600; text-align: center; }
.hbar { position: absolute; left: 6px; right: 25px; bottom: 7px; height: 6px; border-radius: 3px; background: #cfd0d2; }
.vbar { position: absolute; right: 8px; top: 248px; bottom: 13px; width: 6px; border-radius: 3px; background: #cfd0d2; }

/* component library */
.lib { display: flex; flex-direction: column; flex: none; width: 351px; border-left: 1px solid #e4e6ed; }
.libtabs { display: flex; flex: none; height: 40px; border-bottom: 1px solid #e4e6ed; color: #666; }
.libtabs button { width: 70px; border-bottom: 2px solid transparent; }
.libtabs .on { border-color: #4c88ff; color: #111; }
.tools2 { display: flex; align-items: center; gap: 24px; margin: 0 17px 0 auto; }
.libbody { flex: 1; min-height: 0; padding: 9px 15px 0; overflow: hidden; }
.query { display: flex; align-items: center; gap: 10px; height: 37px; margin: 0 5px; padding: 0 0 1px 10px; border: 1px solid #d9dbe8; border-radius: 4px; color: #555; }
.query input { flex: 1; }
.query input::placeholder { color: #aaa; opacity: 1; }
.lib h2 { display: flex; align-items: center; gap: 14px; height: 20px; margin: 17px 0 8px 6px; font-size: 15px; line-height: 20px; }
.lib h2 svg { color: #777; }
.items { display: grid; grid-template-columns: 1fr 1fr; gap: 10px; }
.items button { position: relative; display: flex; align-items: center; gap: 6px; height: 35px; padding: 0 0 1px 7px; border: 1px solid #e6e7ee; border-radius: 4px; text-align: left; }
.items button:nth-child(2n) { padding-left: 8px; gap: 7px; }
.items .wideicon:nth-child(2n) { padding-left: 6px; }
.items .dot::before { content: ""; position: absolute; left: -4px; top: -4px; width: 8px; height: 8px; border-radius: 50%; background: #ff981c; }
.gl { font-size: 7px; font-weight: 700; fill: #4c88ff; text-anchor: middle; }
.gl.fx { font-size: 9px; }

/* bottom bar */
.status { display: flex; align-items: center; gap: 40px; flex: none; height: 39px; padding: 0 24px 1px 20px; border-top: 1px solid #e4e6ed; color: #7a7a7a; }
.status .on { color: #111; }
.sizes { display: flex; gap: 29px; margin-left: auto; }

.ink { position: absolute; left: 0; top: 0; width: 100%; height: 100%; pointer-events: none; }
```
